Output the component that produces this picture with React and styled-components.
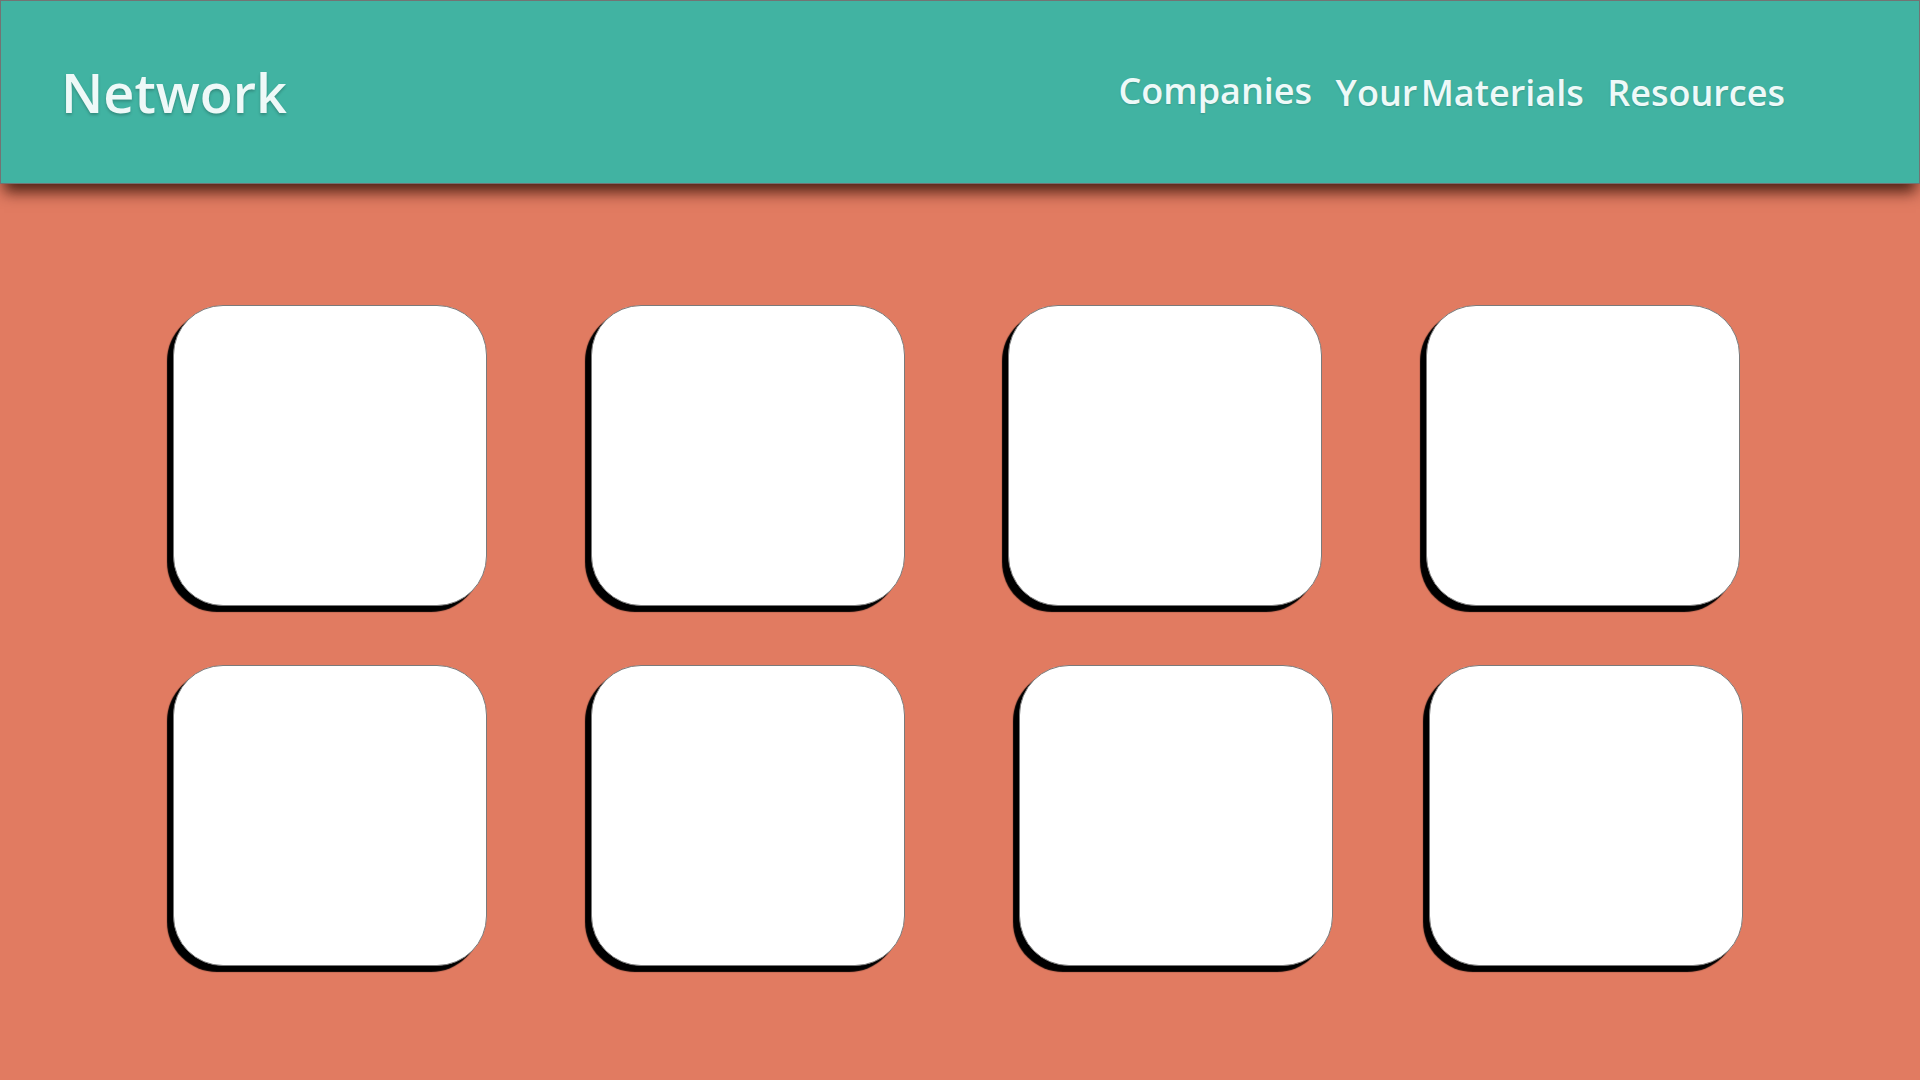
import styled, { createGlobalStyle } from "styled-components";

const GlobalStyle = createGlobalStyle`
  html, body {
    margin: 0;
    padding: 0;
    background-color: #e17b61;
    font-family: "Open Sans", "DejaVu Sans", sans-serif;
  }
  * {
    box-sizing: border-box;
  }
`;

const Page = styled.div`
  width: 1920px;
  height: 1080px;
  overflow: hidden;
  background-color: #e17b61;
`;

const Header = styled.header`
  position: relative;
  z-index: 2;
  height: 184px;
  display: flex;
  align-items: center;
  justify-content: space-between;
  padding: 0 134px 0 60px;
  background-color: #41b3a2;
  border: 1px solid #737373;
  box-shadow: 0 12px 14px -4px rgba(40, 10, 0, 0.8);
`;

const Logo = styled.h1`
  margin: 0;
  font-size: 54px;
  font-weight: 600;
  color: #eef9f8;
  text-shadow: 0 2px 3px rgba(0, 0, 0, 0.22);
`;

const Nav = styled.nav`
  display: flex;
  align-items: center;
  gap: 23.5px;
`;

const NavLink = styled.a`
  font-size: 36px;
  font-weight: 600;
  color: #eef9f8;
  text-decoration: none;
  word-spacing: -6px;
  text-shadow: 0 1px 2px rgba(0, 0, 0, 0.15);
  margin-top: ${({ $raised }) => ($raised ? "-3px" : "0")};
`;

const Grid = styled.main`
  display: grid;
  grid-template-columns: repeat(4, 314px);
  column-gap: 103.5px;
  row-gap: 59px;
  padding: 121px 0 0 173px;
`;

const Card = styled.div`
  width: 314px;
  height: 301px;
  margin-left: ${({ $shift }) => $shift || 0}px;
  background-color: #ffffff;
  border: 1px solid #7a7a7a;
  border-radius: 50px;
  box-shadow: -6px 6px 1px #000000;
`;

const shifts = [0, 0, 0, 0, 0, 0, 11, 3];

export default function App() {
  return (
    <Page>
      <GlobalStyle />
      <Header>
        <Logo>Network</Logo>
        <Nav>
          <NavLink href="#" $raised>Companies</NavLink>
          <NavLink href="#">Your Materials</NavLink>
          <NavLink href="#">Resources</NavLink>
        </Nav>
      </Header>
      <Grid>
        {shifts.map((s, i) => (
          <Card key={i} $shift={s} />
        ))}
      </Grid>
    </Page>
  );
}
